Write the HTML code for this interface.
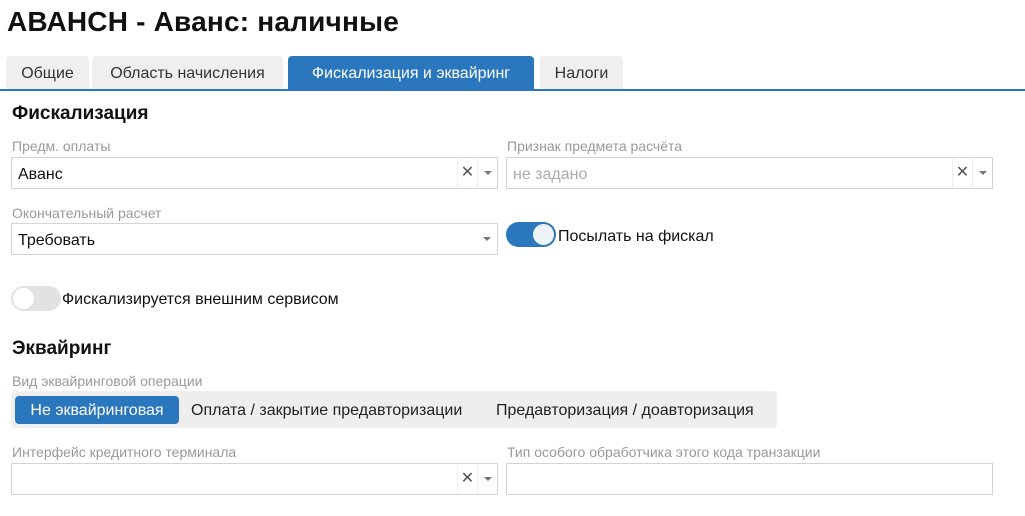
<!DOCTYPE html>
<html><head><meta charset="utf-8"><style>
*{box-sizing:border-box;margin:0;padding:0}
body{width:1025px;height:516px;background:#fff;font-family:"Liberation Sans","DejaVu Sans",sans-serif;color:#111;position:relative;overflow:hidden}
.a{position:absolute;white-space:nowrap}
.tab{position:absolute;top:56px;height:34px;background:#efefef;border-radius:4px 4px 0 0;font-size:16px;line-height:36px;text-align:center;color:#333}
.lbl{position:absolute;font-size:14px;color:#999;white-space:nowrap}
.inp{position:absolute;height:32px;border:1px solid #d4d4d4;background:#fff;font-size:16px;line-height:33px;padding-left:6px}
.x{position:absolute;top:0;width:20px;height:30px;border-left:1px solid #eee;text-align:center;font-size:16px;line-height:30px;color:#555}
.dd{position:absolute;top:0;width:20px;height:30px;border-left:1px solid #eee}
.dd:after{content:"";position:absolute;left:6px;top:13px;border-left:4px solid transparent;border-right:4px solid transparent;border-top:4px solid #777}
h2{position:absolute;font-size:19px;font-weight:bold;white-space:nowrap}
</style></head><body>
<div class="a" style="left:7px;top:6px;font-size:28px;font-weight:bold;letter-spacing:0.2px">АВАНСН - Аванс: наличные</div>
<div class="tab" style="left:6px;width:83px">Общие</div>
<div class="tab" style="left:92px;width:191px">Область начисления</div>
<div class="tab" style="left:288px;width:246px;background:#2b77bd;color:#fff">Фискализация и эквайринг</div>
<div class="tab" style="left:540px;width:83px">Налоги</div>
<div class="a" style="left:0;top:89px;width:1025px;height:2px;background:#2b77bd"></div>

<h2 style="left:12px;top:103px">Фискализация</h2>
<div class="lbl" style="left:12px;top:138px">Предм. оплаты</div>
<div class="inp" style="left:11px;top:157px;width:487px">Аванс<div class="x" style="left:445px">✕</div><div class="dd" style="left:465px"></div></div>
<div class="lbl" style="left:507px;top:138px">Признак предмета расчёта</div>
<div class="inp" style="left:506px;top:157px;width:487px;color:#aaa">не задано<div class="x" style="left:445px">✕</div><div class="dd" style="left:465px"></div></div>

<div class="lbl" style="left:12px;top:205px">Окончательный расчет</div>
<div class="inp" style="left:11px;top:223px;width:487px">Требовать<div class="dd" style="left:465px;border:none"></div></div>
<div class="a" style="left:506px;top:222px;width:50px;height:25px;border-radius:13px;background:#2b77bd"><div style="position:absolute;right:2px;top:2px;width:21px;height:21px;border-radius:50%;background:#eef3f8"></div></div>
<div class="a" style="left:558px;top:228px;font-size:16px">Посылать на фискал</div>

<div class="a" style="left:11px;top:286px;width:50px;height:25px;border-radius:13px;background:#e2e2e2"><div style="position:absolute;left:2px;top:2px;width:21px;height:21px;border-radius:50%;background:#fff"></div></div>
<div class="a" style="left:62px;top:291px;font-size:16px">Фискализируется внешним сервисом</div>

<h2 style="left:12px;top:338px">Эквайринг</h2>
<div class="lbl" style="left:12px;top:373px">Вид эквайринговой операции</div>
<div class="a" style="left:11px;top:391px;width:766px;height:37px;background:#eee;border-radius:4px"></div>
<div class="a" style="left:15px;top:396px;width:164px;height:28px;background:#2b77bd;border-radius:4px;color:#fff;font-size:16px;line-height:30px;text-align:center">Не эквайринговая</div>
<div class="a" style="left:191px;top:396px;font-size:16px;line-height:30px;color:#222">Оплата / закрытие предавторизации</div>
<div class="a" style="left:496px;top:396px;font-size:16px;line-height:30px;color:#222">Предавторизация / доавторизация</div>

<div class="lbl" style="left:12px;top:444px">Интерфейс кредитного терминала</div>
<div class="inp" style="left:11px;top:463px;width:487px"><div class="x" style="left:445px">✕</div><div class="dd" style="left:465px"></div></div>
<div class="lbl" style="left:507px;top:444px">Тип особого обработчика этого кода транзакции</div>
<div class="inp" style="left:506px;top:463px;width:487px"></div>
</body></html>
